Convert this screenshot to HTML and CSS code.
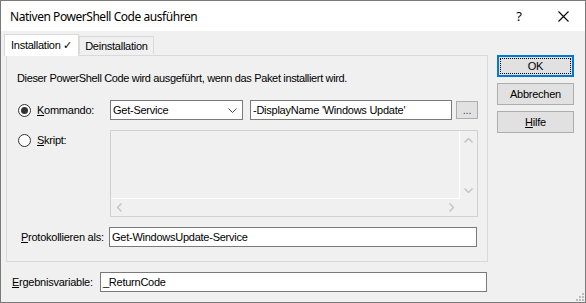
FILE: index.html
```html
<!DOCTYPE html>
<html lang="de">
<head>
    <meta charset="UTF-8">
    <title>Nativen PowerShell Code ausführen</title>
    <link rel="stylesheet" href="styles.css">
</head>
<body>
    <div class="window">
        <div class="titlebar">
            <span class="title">Nativen PowerShell Code ausführen</span>
            <span class="help">?</span>
            <span class="close">
                <svg width="11" height="11" viewBox="0 0 11 11"><path d="M0.5 0.5L10.5 10.5M10.5 0.5L0.5 10.5" stroke="#000" stroke-width="1.1" fill="none"/></svg>
            </span>
        </div>

        <div class="content">
            <div class="main">
                <div class="tabs">
                    <div class="tab active">Installation ✓</div>
                    <div class="tab">Deinstallation</div>
                </div>

                <div class="panel">
                    <div class="desc">Dieser PowerShell Code wird ausgeführt, wenn das Paket installiert wird.</div>

                    <div class="row row-cmd">
                        <label class="option">
                            <span class="radio checked"></span>
                            <span><u>K</u>ommando:</span>
                        </label>
                        <div class="combo">
                            <span>Get-Service</span>
                            <svg width="9" height="5" viewBox="0 0 9 5"><path d="M0.5 0.5L4.5 4.5L8.5 0.5" stroke="#444" fill="none"/></svg>
                        </div>
                        <div class="field field-args">-DisplayName 'Windows Update'</div>
                        <div class="dots">...</div>
                    </div>

                    <div class="row row-script">
                        <label class="option">
                            <span class="radio"></span>
                            <span><u>S</u>kript:</span>
                        </label>
                        <div class="script">
                            <div class="script-top">
                                <div class="script-text"></div>
                                <div class="vscroll">
                                    <svg width="9" height="5" viewBox="0 0 9 5"><path d="M0.5 4.5L4.5 0.5L8.5 4.5" stroke="#c4c4c4" stroke-width="1.5" fill="none"/></svg>
                                    <svg width="9" height="5" viewBox="0 0 9 5"><path d="M0.5 0.5L4.5 4.5L8.5 0.5" stroke="#c4c4c4" stroke-width="1.5" fill="none"/></svg>
                                </div>
                            </div>
                            <div class="hscroll">
                                <svg width="5" height="9" viewBox="0 0 5 9"><path d="M4.5 0.5L0.5 4.5L4.5 8.5" stroke="#c4c4c4" stroke-width="1.5" fill="none"/></svg>
                                <svg width="5" height="9" viewBox="0 0 5 9"><path d="M0.5 0.5L4.5 4.5L0.5 8.5" stroke="#c4c4c4" stroke-width="1.5" fill="none"/></svg>
                            </div>
                        </div>
                    </div>

                    <div class="row row-log">
                        <span class="log-label"><u>P</u>rotokollieren als:</span>
                        <div class="field field-log">Get-WindowsUpdate-Service</div>
                    </div>
                </div>

                <div class="result">
                    <span class="result-label"><u>E</u>rgebnisvariable:</span>
                    <div class="field field-result">_ReturnCode</div>
                </div>
            </div>

            <div class="side">
                <div class="btn default"><span>OK</span></div>
                <div class="btn">Abbrechen</div>
                <div class="btn"><span><u>H</u>ilfe</span></div>
            </div>
        </div>

        <div class="grip">
            <svg width="8" height="8" viewBox="0 0 8 8" fill="#bcbcbc">
                <rect x="6" y="0" width="2" height="2"/>
                <rect x="3" y="3" width="2" height="2"/><rect x="6" y="3" width="2" height="2"/>
                <rect x="0" y="6" width="2" height="2"/><rect x="3" y="6" width="2" height="2"/><rect x="6" y="6" width="2" height="2"/>
            </svg>
        </div>
    </div>
</body>
</html>
```

FILE: styles.css
```css
body {
    margin: 0;
    font-family: 'Liberation Sans', Arial, sans-serif;
    font-size: 11px;
    letter-spacing: -0.25px;
    color: #000;
    background-color: #f0f0f0;
}

u {
    text-decoration: underline;
    text-underline-offset: 1px;
}

.window {
    position: relative;
    width: 586px;
    height: 303px;
    box-sizing: border-box;
    border: 1px solid #7a7a7a;
    background-color: #f0f0f0;
}

.titlebar {
    display: flex;
    align-items: center;
    height: 30px;
    background-color: #fff;
}

.title {
    flex: 1;
    padding-left: 9px;
    font-family: 'Noto Sans', sans-serif;
    font-size: 12px;
    letter-spacing: -0.45px;
}

.help {
    width: 46px;
    text-align: center;
    font-family: 'Noto Sans', sans-serif;
    font-size: 13px;
    margin-right: -2px;
}

.close {
    display: flex;
    justify-content: center;
    width: 46px;
    margin-right: -1px;
}

.content {
    display: flex;
    padding: 3px 0 0 3px;
}

.main {
    width: 484px;
}

.tabs {
    display: flex;
    align-items: flex-end;
    height: 21px;
    position: relative;
    z-index: 1;
}

.tab {
    height: 17px;
    padding: 0 5px;
    line-height: 18px;
    border: 1px solid #d9d9d9;
    border-bottom: none;
    background-color: #f0f0f0;
    margin-bottom: 1px;
}

.tab.active {
    height: 21px;
    line-height: 20px;
    padding: 0 6px;
    margin-bottom: -1px;
    background-color: #fff;
}

.panel {
    margin-left: 2px;
    width: 482px;
    height: 207px;
    box-sizing: border-box;
    border: 1px solid #d9d9d9;
    background-color: #f0f0f0;
    padding: 15px 0 0 10px;
}

.desc {
    height: 14px;
    line-height: 14px;
    letter-spacing: -0.35px;
}

.row {
    display: flex;
}

.row-cmd {
    margin-top: 15px;
    height: 20px;
    align-items: center;
}

.option {
    display: flex;
    align-items: center;
    width: 92px;
    padding-left: 1px;
}

.radio {
    width: 11px;
    height: 11px;
    border: 1px solid #333;
    border-radius: 50%;
    background-color: #fff;
    margin-right: 6px;
    display: flex;
    align-items: center;
    justify-content: center;
}

.radio.checked::after {
    content: "";
    width: 7px;
    height: 7px;
    border-radius: 50%;
    background-color: #333;
}

.combo {
    width: 133px;
    height: 20px;
    box-sizing: border-box;
    border: 1px solid #7a7a7a;
    background-color: #fff;
    display: flex;
    align-items: center;
    justify-content: space-between;
    padding: 0 5px 0 2px;
}

.field {
    height: 20px;
    box-sizing: border-box;
    border: 1px solid #7a7a7a;
    background-color: #fff;
    line-height: 18px;
    padding-left: 2px;
}

.field-args {
    width: 202px;
    margin-left: 7px;
}

.dots {
    width: 22px;
    height: 18px;
    box-sizing: border-box;
    margin-left: 4px;
    border: 1px solid #adadad;
    background-color: #e1e1e1;
    text-align: center;
    line-height: 16px;
    color: #444;
}

.row-script {
    margin-top: 10px;
    align-items: flex-start;
}

.row-script .option {
    height: 20px;
}

.script {
    width: 368px;
    height: 87px;
    box-sizing: border-box;
    border: 1px solid #d0d0d0;
    display: flex;
    flex-direction: column;
}

.script-top {
    flex: 1;
    display: flex;
}

.script-text {
    flex: 1;
    border-right: 1px solid #fff;
    border-bottom: 1px solid #fff;
}

.vscroll {
    width: 17px;
    display: flex;
    flex-direction: column;
    justify-content: space-between;
    align-items: center;
    padding: 7px 0 6px;
}

.hscroll {
    height: 17px;
    margin-right: 17px;
    display: flex;
    justify-content: space-between;
    align-items: center;
    padding: 0 6px;
}

.row-log {
    margin-top: 10px;
    align-items: center;
}

.log-label {
    width: 92px;
    padding-left: 4px;
    box-sizing: border-box;
}

.field-log {
    width: 368px;
}

.result {
    display: flex;
    align-items: center;
    margin-top: 10px;
    padding-left: 8px;
}

.result-label {
    width: 88px;
}

.field-result {
    width: 387px;
}

.side {
    display: flex;
    flex-direction: column;
    gap: 6px;
    margin-left: 9px;
    margin-top: 21px;
}

.btn {
    width: 77px;
    height: 22px;
    box-sizing: border-box;
    border: 1px solid #adadad;
    background-color: #e1e1e1;
    display: flex;
    align-items: center;
    justify-content: center;
}

.btn.default {
    border: 2px solid #0078d7;
    padding: 1px;
}

.btn.default span {
    flex: 1;
    align-self: stretch;
    display: flex;
    align-items: center;
    justify-content: center;
    outline: 1px dotted #000;
    outline-offset: -1px;
}

.grip {
    position: absolute;
    right: 1px;
    bottom: 1px;
    display: flex;
}
```
